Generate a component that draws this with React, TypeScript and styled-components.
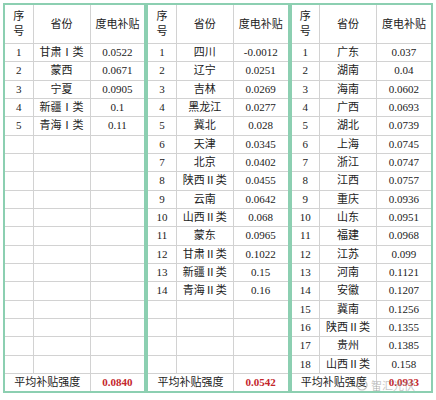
import React from 'react';
import styled, { createGlobalStyle } from 'styled-components';

const GlobalStyle = createGlobalStyle`
  html, body {
    margin: 0;
    padding: 0;
    background: #ffffff;
  }
`;

const Page = styled.div`
  position: relative;
  width: 436px;
  height: 400px;
  padding: 3px 0 0 3px;
  box-sizing: border-box;
  display: grid;
  grid-template-columns: repeat(3, 143.3px);
  align-items: start;
  font-family: "Liberation Serif", "Noto Sans CJK SC", serif;
  color: #222222;
`;

const Panel = styled.div`
  border: 2px solid #8ccfb1;
  box-sizing: border-box;
`;

const Table = styled.table`
  width: 100%;
  border-collapse: collapse;
  border-style: hidden;
  table-layout: fixed;
  font-size: 11px;
`;

const Cell = styled.td`
  border: 1px solid #d2d2d2;
  height: 17.33px;
  padding: 0;
  text-align: center;
  line-height: 13px;
  white-space: nowrap;
`;

const HeadCell = styled.th`
  border: 1px solid #d2d2d2;
  height: 38px;
  padding: 0;
  font-weight: normal;
  text-align: center;
  line-height: 15px;
`;

const FootLabel = styled(Cell)`
  height: 17px;
`;

const FootValue = styled(Cell)`
  height: 17px;
  color: #c4262c;
  font-weight: bold;
`;

const Watermark = styled.div`
  position: absolute;
  left: 356px;
  top: 377px;
  display: flex;
  align-items: center;
  gap: 3px;
  font-family: "Noto Sans CJK SC", sans-serif;
  font-size: 11px;
  color: rgba(150, 150, 150, 0.55);
  pointer-events: none;
`;

type Row = [string, string];

const tables: { rows: Row[]; avg: string }[] = [
  {
    rows: [
      ['甘肃Ⅰ类', '0.0522'],
      ['蒙西', '0.0671'],
      ['宁夏', '0.0905'],
      ['新疆Ⅰ类', '0.1'],
      ['青海Ⅰ类', '0.11'],
    ],
    avg: '0.0840',
  },
  {
    rows: [
      ['四川', '-0.0012'],
      ['辽宁', '0.0251'],
      ['吉林', '0.0269'],
      ['黑龙江', '0.0277'],
      ['冀北', '0.028'],
      ['天津', '0.0345'],
      ['北京', '0.0402'],
      ['陕西Ⅱ类', '0.0455'],
      ['云南', '0.0642'],
      ['山西Ⅱ类', '0.068'],
      ['蒙东', '0.0965'],
      ['甘肃Ⅱ类', '0.1022'],
      ['新疆Ⅱ类', '0.15'],
      ['青海Ⅱ类', '0.16'],
    ],
    avg: '0.0542',
  },
  {
    rows: [
      ['广东', '0.037'],
      ['湖南', '0.04'],
      ['海南', '0.0602'],
      ['广西', '0.0693'],
      ['湖北', '0.0739'],
      ['上海', '0.0745'],
      ['浙江', '0.0747'],
      ['江西', '0.0757'],
      ['重庆', '0.0936'],
      ['山东', '0.0951'],
      ['福建', '0.0968'],
      ['江苏', '0.099'],
      ['河南', '0.1121'],
      ['安徽', '0.1207'],
      ['冀南', '0.1256'],
      ['陕西Ⅱ类', '0.1355'],
      ['贵州', '0.1385'],
      ['山西Ⅱ类', '0.158'],
    ],
    avg: '0.0933',
  },
];

const ROWS = 18;

const SubsidyTable = ({ rows, avg }: { rows: Row[]; avg: string }) => (
  <Panel>
    <Table>
      <colgroup>
        <col style={{ width: 28 }} />
        <col style={{ width: 57 }} />
        <col />
      </colgroup>
      <thead>
        <tr>
          <HeadCell>
            序
            <br />
            号
          </HeadCell>
          <HeadCell>省份</HeadCell>
          <HeadCell>度电补贴</HeadCell>
        </tr>
      </thead>
      <tbody>
        {Array.from({ length: ROWS }).map((_, i) => {
          const row = rows[i];
          return (
            <tr key={i}>
              <Cell>{row ? i + 1 : ''}</Cell>
              <Cell>{row ? row[0] : ''}</Cell>
              <Cell>{row ? row[1] : ''}</Cell>
            </tr>
          );
        })}
        <tr>
          <FootLabel colSpan={2}>平均补贴强度</FootLabel>
          <FootValue>{avg}</FootValue>
        </tr>
      </tbody>
    </Table>
  </Panel>
);

const App = () => (
  <>
    <GlobalStyle />
    <Page>
      {tables.map((t, i) => (
        <SubsidyTable key={i} rows={t.rows} avg={t.avg} />
      ))}
      <Watermark>
        <svg width="12" height="12" viewBox="0 0 12 12">
          <circle cx="6" cy="6" r="5" fill="none" stroke="currentColor" strokeWidth="1.2" />
          <path d="M3.5 6.5 L5.5 4 L8.5 7" fill="none" stroke="currentColor" strokeWidth="1.2" />
        </svg>
        智汇光伏
      </Watermark>
    </Page>
  </>
);

export default App;
